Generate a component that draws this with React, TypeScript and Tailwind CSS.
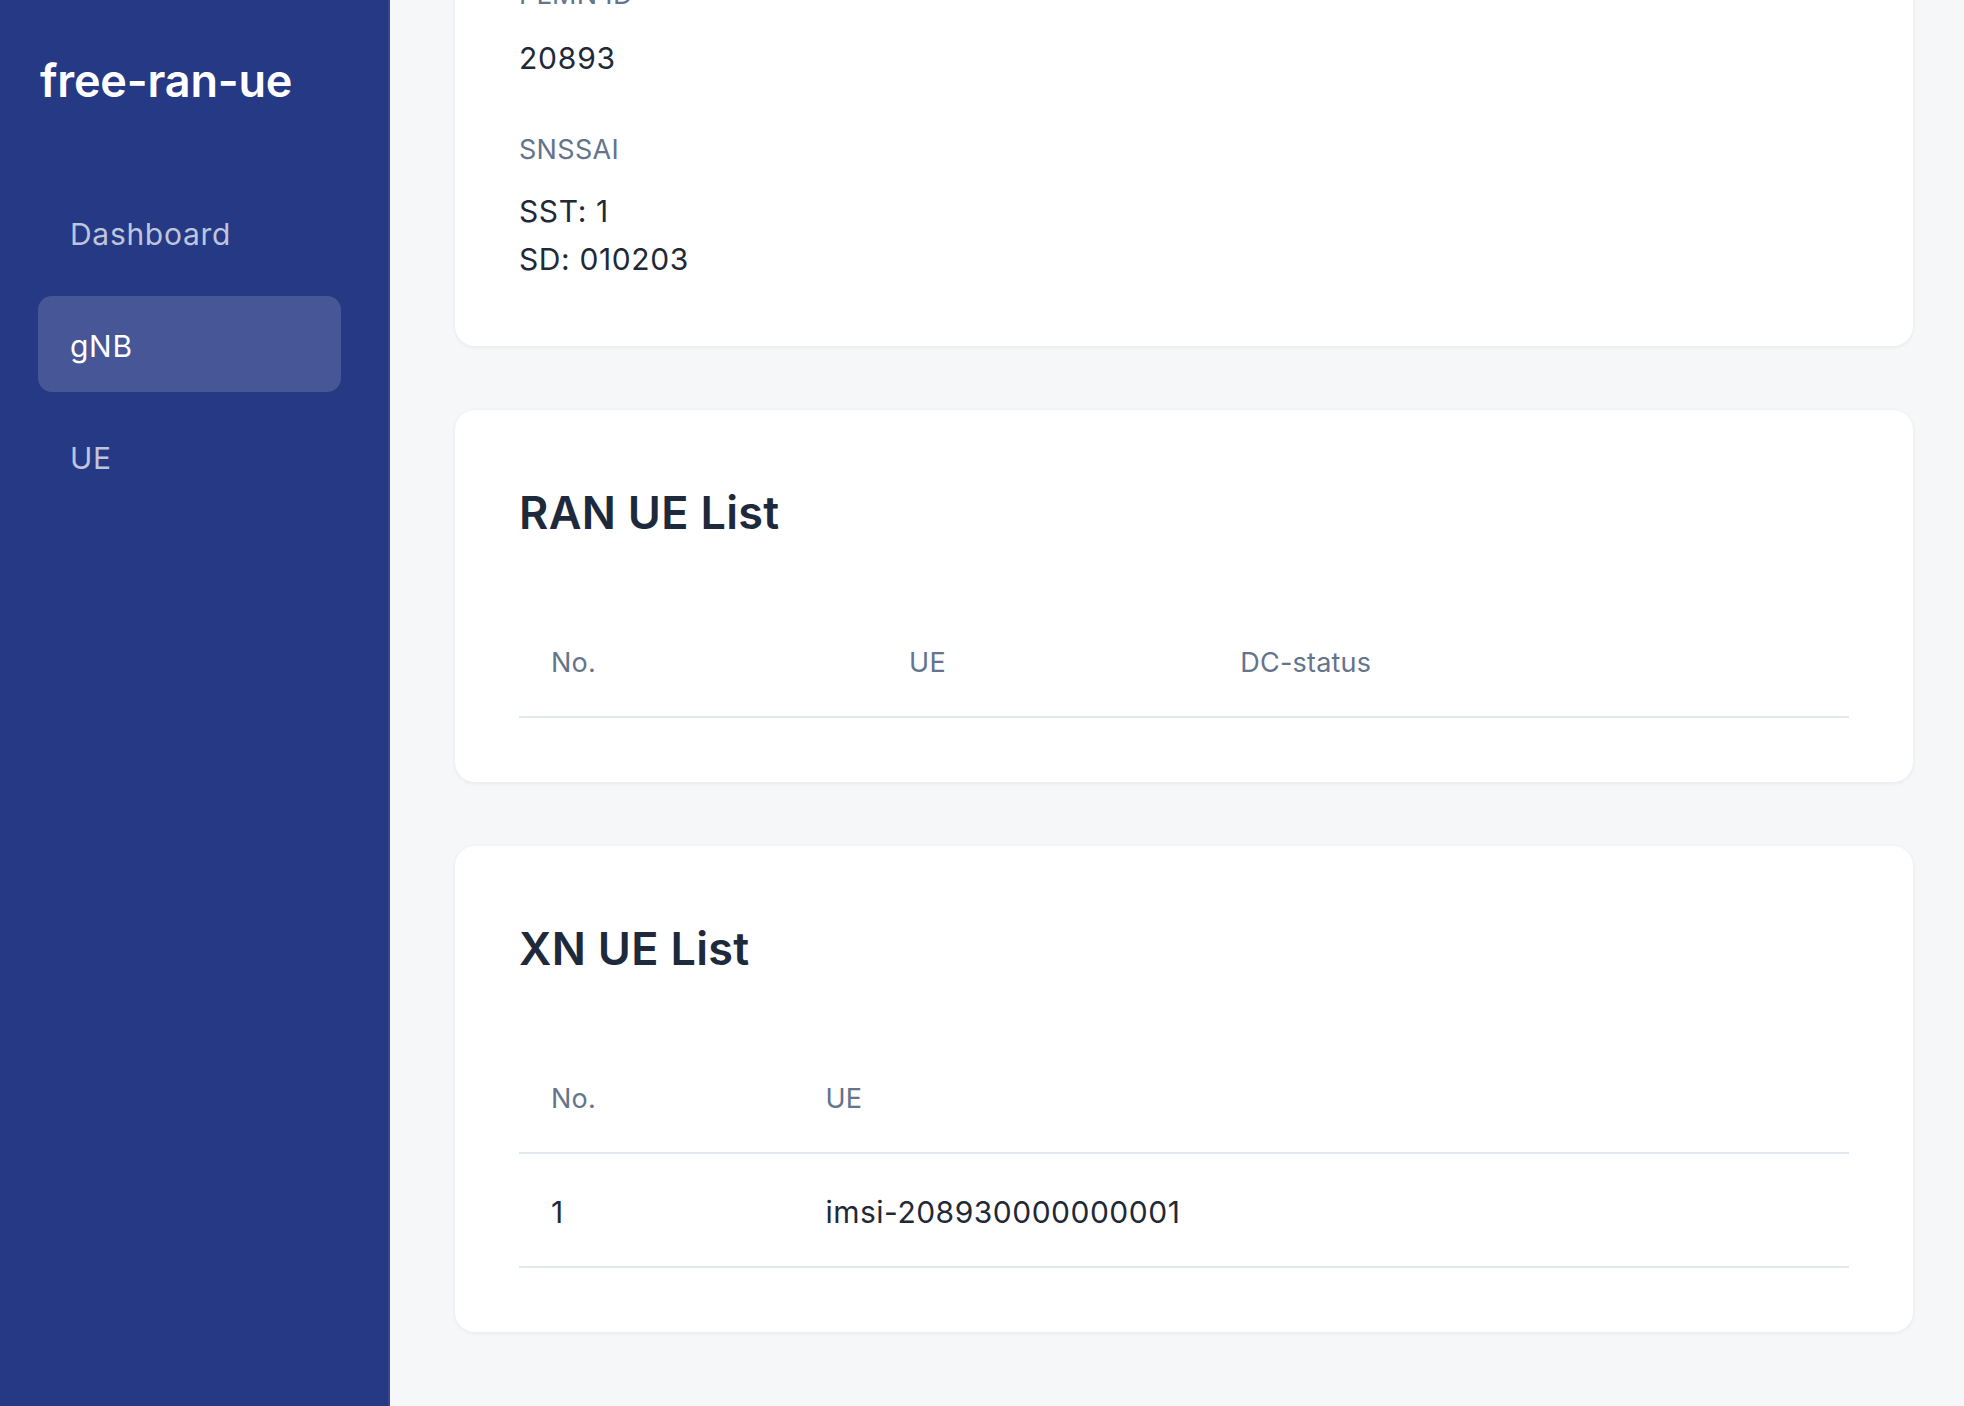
import React from 'react';

const navItems = ['Dashboard', 'gNB', 'UE'];

const ranColumns = ['No.', 'UE', 'DC-status'];
const xnColumns = ['No.', 'UE'];
const xnRows = [{ no: 1, ue: 'imsi-208930000000001' }];

function Sidebar({ active }: { active: string }) {
    return (
        <aside className="w-[390px] shrink-0 h-screen bg-[#263984] border-r-2 border-[#34468c] pt-[54px]">
            <h1 className="pl-[40px] text-[45px] leading-[54px] font-semibold text-white tracking-[-0.2px]">
                free-ran-ue
            </h1>
            <nav className="mt-[76px] pl-[38px] flex flex-col gap-[16px]">
                {navItems.map((item) => (
                    <div
                        key={item}
                        className={
                            item === active
                                ? 'w-[303px] h-[96px] rounded-[14px] bg-white/15 text-white flex items-center pl-[32px] pt-[4px] text-[30px] tracking-[0.7px]'
                                : 'w-[303px] h-[96px] rounded-[14px] text-[#bfc5dc] flex items-center pl-[32px] pt-[4px] text-[30px] tracking-[0.7px]'
                        }
                    >
                        {item}
                    </div>
                ))}
            </nav>
        </aside>
    );
}

function Card({
    children,
    className,
}: {
    children: React.ReactNode;
    className?: string;
}) {
    return (
        <section
            className={
                'w-[1458px] bg-white rounded-[20px] shadow-[0_1px_4px_rgba(15,23,42,0.07)] px-[64px] ' +
                (className || '')
            }
        >
            {children}
        </section>
    );
}

function UeTable({
    columns,
    rows,
}: {
    columns: string[];
    rows: { no: number; ue: string }[];
}) {
    return (
        <table className="w-full mt-[70px] border-collapse">
            <thead>
                <tr className="border-b-2 border-[#e2e8f0]">
                    {columns.map((col) => (
                        <th
                            key={col}
                            className="text-left font-normal text-[27px] leading-[40px] text-[#64748b] px-[32px] py-[33px] tracking-[0.2px]"
                        >
                            {col}
                        </th>
                    ))}
                </tr>
            </thead>
            <tbody>
                {rows.map((row) => (
                    <tr key={row.no} className="border-b-2 border-[#e2e8f0]">
                        <td className="text-[30px] leading-[42px] text-[#1f2937] px-[32px] pt-[37px] pb-[33px] tracking-[0.5px]">
                            {row.no}
                        </td>
                        <td className="text-[30px] leading-[42px] text-[#1f2937] px-[32px] pt-[37px] pb-[33px] tracking-[0.5px]">
                            {row.ue}
                        </td>
                    </tr>
                ))}
            </tbody>
        </table>
    );
}

export default function App() {
    return (
        <div className="flex h-screen overflow-hidden bg-[#f6f7f9] font-['Inter','Noto_Sans',sans-serif]">
            <Sidebar active="gNB" />
            <main className="flex-1 overflow-hidden pl-[65px]">
                <div className="-mt-[89px] flex flex-col gap-[64px] pb-[74px]">
                    <Card className="pt-[64px] pb-[63px]">
                        <p className="text-[27px] leading-[40px] text-[#64748b] tracking-[0.3px]">PLMN ID</p>
                        <p className="mt-[19px] text-[30px] leading-[48px] text-[#1f2937] tracking-[0.8px]">20893</p>
                        <p className="mt-[48px] text-[27px] leading-[40px] text-[#64748b] tracking-[0.3px]">SNSSAI</p>
                        <div className="mt-[17px] text-[30px] leading-[48px] text-[#1f2937] tracking-[0.6px]">
                            <p>SST: 1</p>
                            <p>SD: 010203</p>
                        </div>
                    </Card>
                    <Card className="pt-[76px] pb-[64px]">
                        <h2 className="text-[45px] leading-[54px] font-semibold text-[#1e293b] tracking-[0.3px]">
                            RAN UE List
                        </h2>
                        <UeTable columns={ranColumns} rows={[]} />
                    </Card>
                    <Card className="pt-[76px] pb-[64px]">
                        <h2 className="text-[45px] leading-[54px] font-semibold text-[#1e293b] tracking-[0.3px]">
                            XN UE List
                        </h2>
                        <UeTable columns={xnColumns} rows={xnRows} />
                    </Card>
                </div>
            </main>
        </div>
    );
}
